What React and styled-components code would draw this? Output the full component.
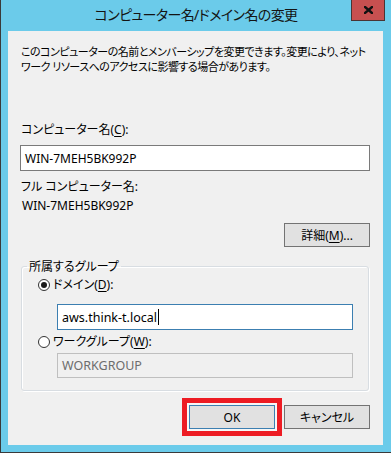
import React from 'react';
import styled, { createGlobalStyle } from 'styled-components';

const GlobalStyle = createGlobalStyle`
  html, body {
    margin: 0;
    padding: 0;
    background: #ffffff;
  }
  body {
    font-family: "Noto Sans", "Noto Sans CJK JP", sans-serif;
    font-feature-settings: "palt";
  }
`;

function App() {
    return (
        <>
            <GlobalStyle />
            <Window>
                <TitleBar>
                    <span />
                    <Title>コンピューター名/ドメイン名の変更</Title>
                    <CloseButton aria-label="閉じる">
                        <svg width="9" height="8" viewBox="0 0 9 8">
                            <path d="M1 1 L8 7 M8 1 L1 7" stroke="#111" strokeWidth="2.4" strokeLinecap="square" />
                        </svg>
                    </CloseButton>
                </TitleBar>
                <Panel>
                    <Description>
                        このコンピューターの名前とメンバーシップを変更できます。変更により、ネット<br />
                        ワーク リソースへのアクセスに影響する場合があります。
                    </Description>
                    <FieldLabel top={48}>コンピューター名(<u>C</u>):</FieldLabel>
                    <TextBox>WIN-7MEH5BK992P</TextBox>
                    <FieldLabel top={8}>フル コンピューター名:</FieldLabel>
                    <Value>WIN-7MEH5BK992P</Value>
                    <ButtonRow top={10}>
                        <Button>詳細(<u>M</u>)...</Button>
                    </ButtonRow>
                    <GroupBox>
                        <Legend>所属するグループ</Legend>
                        <RadioRow top={3}>
                            <Radio checked />
                            <span>ドメイン(<u>D</u>):</span>
                        </RadioRow>
                        <IndentedBox focused top={12}>
                            aws.think-t.local<Caret />
                        </IndentedBox>
                        <RadioRow top={4}>
                            <Radio />
                            <span>ワークグループ(<u>W</u>):</span>
                        </RadioRow>
                        <IndentedBox disabled top={4}>WORKGROUP</IndentedBox>
                    </GroupBox>
                    <ButtonRow top={14}>
                        <Button primary highlighted>OK</Button>
                        <Button>キャンセル</Button>
                    </ButtonRow>
                </Panel>
            </Window>
        </>
    );
}

const Window = styled.div`
    width: 391px;
    height: 453px;
    box-sizing: border-box;
    background: #6bcbea;
    border-left: 1px solid #3a3a3a;
    border-bottom: 1px solid #3a3a3a;
    display: flex;
    flex-direction: column;
`;
const TitleBar = styled.div`
    height: 31px;
    flex: none;
    display: grid;
    grid-template-columns: 1fr auto 1fr;
    align-items: start;
`;
const Title = styled.div`
    font-size: 14px;
    line-height: 20px;
    margin-top: 5px;
    color: #141414;
    letter-spacing: -0.6px;
    white-space: nowrap;
`;
const CloseButton = styled.div`
    justify-self: end;
    margin-right: 6px;
    width: 34px;
    height: 21px;
    box-sizing: border-box;
    background: #c75050;
    border: 1px solid #4a3434;
    border-top: none;
    display: flex;
    align-items: center;
    justify-content: center;
`;
const Panel = styled.div`
    flex: 1;
    margin: 0 8px 7px 7px;
    background: #f0f0f0;
    padding: 13px 13px 0 12px;
    font-size: 12px;
    line-height: 15px;
    color: #000;
    display: flex;
    flex-direction: column;
    u {
        text-decoration: underline;
        text-underline-offset: 2px;
    }
`;
const Description = styled.p`
    margin: 0 0 0 1px;
    font-size: 11px;
    letter-spacing: -0.5px;
    white-space: nowrap;
`;
const FieldLabel = styled.div`
    margin-top: ${p => p.top}px;
    margin-left: 1px;
    white-space: nowrap;
`;
const TextBox = styled.div`
    margin-top: 8px;
    height: 26px;
    box-sizing: border-box;
    border: 1px solid #7a7a7a;
    background: #fff;
    padding: 0 4px;
    display: flex;
    align-items: center;
    font-size: 12px;
`;
const Value = styled.div`
    margin-top: 4px;
    margin-left: 2px;
`;
const ButtonRow = styled.div`
    margin-top: ${p => p.top}px;
    display: flex;
    justify-content: flex-end;
    gap: 9px;
`;
const Button = styled.button`
    width: 86px;
    height: 24px;
    box-sizing: border-box;
    background: #e1e1e1;
    border: 1px solid ${p => (p.primary ? '#3c7fb1' : '#737373')};
    font-family: inherit;
    font-feature-settings: "palt";
    font-size: 12px;
    font-weight: 400;
    color: #000;
    padding: 0;
    box-shadow: ${p => (p.highlighted ? '0 0 0 2px #f7f7f7, 0 0 0 7px #ed1c24' : 'none')};
    u {
        text-underline-offset: 2px;
    }
`;
const GroupBox = styled.fieldset`
    margin: 12px 1px 0 1px;
    padding: 0 15px 12px 16px;
    border: 1px solid #d8dde2;
    border-radius: 3px;
    box-shadow: 1px 1px 0 #ffffff, inset 1px 1px 0 #ffffff;
    display: flex;
    flex-direction: column;
`;
const Legend = styled.legend`
    margin-left: -11px;
    padding: 0 2px;
    font-size: 12px;
    line-height: 15px;
`;
const RadioRow = styled.div`
    margin-top: ${p => p.top}px;
    display: flex;
    align-items: center;
    gap: 3px;
`;
const Radio = styled.span`
    width: 12px;
    height: 12px;
    box-sizing: border-box;
    border-radius: 50%;
    border: 1px solid #333;
    background: #fff;
    display: inline-flex;
    align-items: center;
    justify-content: center;
    &::after {
        content: '';
        width: 6px;
        height: 6px;
        border-radius: 50%;
        background: ${p => (p.checked ? '#1a1a1a' : 'transparent')};
    }
`;
const IndentedBox = styled.div`
    margin: ${p => p.top}px 0 0 19px;
    height: ${p => (p.disabled ? 25 : 26)}px;
    box-sizing: border-box;
    border: 1px solid ${p => (p.focused ? '#3c7fb1' : '#bfbfbf')};
    background: ${p => (p.disabled ? '#f0f0f0' : '#fff')};
    color: ${p => (p.disabled ? '#6d6d6d' : '#000')};
    padding: 0 4px;
    display: flex;
    align-items: center;
    font-size: 12.5px;
`;
const Caret = styled.span`
    width: 1px;
    height: 16px;
    margin-left: 1px;
    background: #000;
`;

export default App;
